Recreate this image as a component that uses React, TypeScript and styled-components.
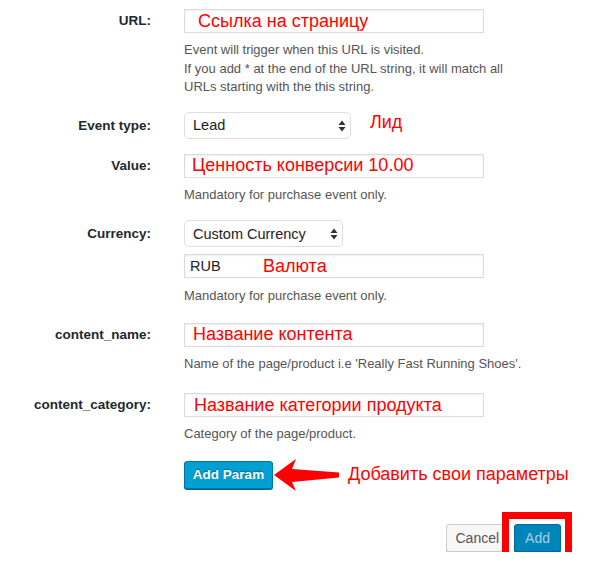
import styled, { createGlobalStyle } from "styled-components";

const GlobalStyle = createGlobalStyle`
  body {
    margin: 0;
    background: #fff;
    font-family: "Liberation Sans", Arial, sans-serif;
  }
`;

const Form = styled.div`
  width: 589px;
  padding-top: 9px;
  display: flex;
  flex-direction: column;
`;

const Row = styled.div<{ $top?: number }>`
  display: grid;
  grid-template-columns: 151px 300px;
  column-gap: 33px;
  margin-top: ${(p) => p.$top ?? 0}px;
`;

const Label = styled.div<{ $h?: number }>`
  text-align: right;
  font-size: 13.5px;
  font-weight: bold;
  color: #23282d;
  line-height: ${(p) => p.$h ?? 24}px;
`;

const Field = styled.div`
  display: flex;
  flex-direction: column;
`;

const Line = styled.div<{ $top?: number }>`
  display: flex;
  align-items: center;
  margin-top: ${(p) => p.$top ?? 0}px;
  white-space: nowrap;
`;

const TextInput = styled.input<{ $pad?: number; $red?: boolean }>`
  box-sizing: border-box;
  width: 300px;
  height: 24px;
  padding: 0 0 0 ${(p) => p.$pad ?? 7}px;
  border: 1px solid #dcdcdc;
  box-shadow: inset 0 1px 2px rgba(0, 0, 0, 0.07);
  font-family: "Liberation Sans", Arial, sans-serif;
  font-size: ${(p) => (p.$red ? 18 : 14.5)}px;
  color: ${(p) => (p.$red ? "#f00" : "#222")};
  outline: none;
  background: #fff;
`;

const SelectWrap = styled.div<{ $w: number }>`
  position: relative;
  flex-shrink: 0;
  width: ${(p) => p.$w}px;
  height: 27px;
`;

const Select = styled.select`
  appearance: none;
  box-sizing: border-box;
  width: 100%;
  height: 100%;
  padding: 0 0 0 8px;
  border: 1px solid #dedede;
  border-radius: 5px;
  background: #fff;
  font-family: "Liberation Sans", Arial, sans-serif;
  font-size: 14.5px;
  color: #222;
  outline: none;
`;

const Caret = styled.svg`
  position: absolute;
  right: 5px;
  top: 8px;
  pointer-events: none;
`;

const Note = styled.div<{ $top?: number }>`
  margin-top: ${(p) => p.$top ?? 8}px;
  font-size: 13px;
  line-height: 18.5px;
  color: #555;
  white-space: nowrap;
`;

const Annotation = styled.span<{ $left?: number; $top?: number }>`
  margin-left: ${(p) => p.$left ?? 0}px;
  margin-top: ${(p) => p.$top ?? 0}px;
  font-size: 18px;
  color: #f00;
`;

const Inline = styled.div`
  position: relative;
  width: 300px;
`;

const InlineAnnotation = styled.span`
  position: absolute;
  left: 79px;
  top: 1px;
  font-size: 18px;
  line-height: 22px;
  color: #f00;
`;

const PrimaryButton = styled.button`
  box-sizing: border-box;
  flex-shrink: 0;
  width: 89px;
  height: 28px;
  padding: 0;
  border: 1px solid #0073aa;
  border-radius: 3px;
  background: #00a0d2;
  box-shadow: 0 1px 0 #006799;
  color: #fff;
  font-family: "Liberation Sans", Arial, sans-serif;
  font-size: 13.5px;
  font-weight: bold;
  text-shadow: 0 -1px 1px #006799;
`;

const PointerArrow = styled.svg`
  flex-shrink: 0;
  margin: -4px 0 -4px 1px;
`;

const Footer = styled.div`
  display: flex;
  justify-content: flex-end;
  gap: 6px;
  padding-right: 28px;
  margin-top: 35px;
`;

const Button = styled.button<{ $primary?: boolean }>`
  position: relative;
  box-sizing: border-box;
  height: 28px;
  padding: 0 ${(p) => (p.$primary ? 10 : 8)}px;
  border: 1px solid ${(p) => (p.$primary ? "#006799" : "#ccc")};
  border-radius: 3px;
  background: ${(p) => (p.$primary ? "#0085ba" : "#f7f7f7")};
  box-shadow: 0 1px 0 ${(p) => (p.$primary ? "#006799" : "#ccc")};
  color: ${(p) => (p.$primary ? "#a6cfdf" : "#555")};
  font-family: "Liberation Sans", Arial, sans-serif;
  font-size: 14px;
`;

const Highlight = styled.span`
  position: absolute;
  left: -13px;
  right: -12px;
  top: -13px;
  bottom: -10px;
  border: 7px solid #f00;
  pointer-events: none;
`;

function Arrows() {
  return (
    <Caret width="8" height="12" viewBox="0 0 8 12">
      <path d="M4 0.5 L7.5 5 H0.5 Z M4 11.5 L7.5 7 H0.5 Z" fill="#333" />
    </Caret>
  );
}

export default function App() {
  return (
    <>
      <GlobalStyle />
      <Form>
        <Row>
          <Label>URL:</Label>
          <Field>
            <TextInput $red $pad={13} defaultValue="Ссылка на страницу" />
            <Note>
              Event will trigger when this URL is visited.
              <br />
              If you add * at the end of the URL string, it will match all
              <br />
              URLs starting with the this string.
            </Note>
          </Field>
        </Row>

        <Row $top={15}>
          <Label $h={27}>Event type:</Label>
          <Line>
            <SelectWrap $w={167}>
              <Select defaultValue="Lead">
                <option>Lead</option>
              </Select>
              <Arrows />
            </SelectWrap>
            <Annotation $left={19} $top={-5}>
              Лид
            </Annotation>
          </Line>
        </Row>

        <Row $top={15}>
          <Label>Value:</Label>
          <Field>
            <TextInput $red $pad={7} defaultValue="Ценность конверсии 10.00" />
            <Note>Mandatory for purchase event only.</Note>
          </Field>
        </Row>

        <Row $top={16}>
          <Label $h={27}>Currency:</Label>
          <Field>
            <SelectWrap $w={159}>
              <Select defaultValue="Custom Currency">
                <option>Custom Currency</option>
              </Select>
              <Arrows />
            </SelectWrap>
            <Line $top={7}>
              <Inline>
                <TextInput $pad={5} defaultValue="RUB" />
                <InlineAnnotation>Валюта</InlineAnnotation>
              </Inline>
            </Line>
            <Note $top={9}>Mandatory for purchase event only.</Note>
          </Field>
        </Row>

        <Row $top={17}>
          <Label>content_name:</Label>
          <Field>
            <TextInput $red $pad={8} defaultValue="Название контента" />
            <Note>Name of the page/product i.e 'Really Fast Running Shoes'.</Note>
          </Field>
        </Row>

        <Row $top={20}>
          <Label>content_category:</Label>
          <Field>
            <TextInput $red $pad={9} defaultValue="Название категории продукта" />
            <Note>Category of the page/product.</Note>
          </Field>
        </Row>

        <Row $top={17}>
          <span />
          <Line>
            <PrimaryButton>Add Param</PrimaryButton>
            <PointerArrow width="66" height="36" viewBox="0 0 66 36">
              <path
                d="M0 18 L22 2 L18 12 L65 15.5 L65 20.5 L18 25 L22 34 Z"
                fill="#f00"
              />
            </PointerArrow>
            <Annotation $left={8}>Добавить свои параметры</Annotation>
          </Line>
        </Row>

        <Footer>
          <Button>Cancel</Button>
          <Button $primary>
            Add
            <Highlight />
          </Button>
        </Footer>
      </Form>
    </>
  );
}
